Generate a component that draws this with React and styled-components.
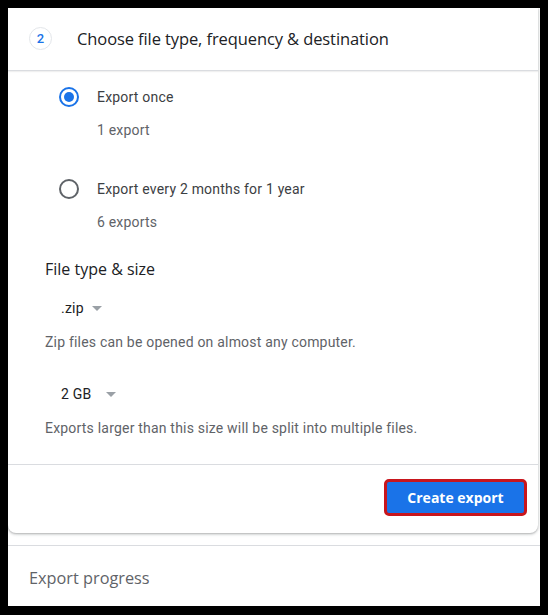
import styled, { createGlobalStyle } from "styled-components";

const GlobalStyle = createGlobalStyle`
  html, body {
    margin: 0;
    padding: 0;
    background: #000;
  }
  body {
    font-family: Roboto, "Liberation Sans", Arial, sans-serif;
  }
`;

const Screen = styled.div`
  margin: 8px 0 0 8px;
  width: 532px;
  height: 598px;
  background: #fff;
  overflow: hidden;
  display: flex;
  flex-direction: column;
`;

const Card = styled.section`
  margin-right: 2px;
  background: #fff;
  border-radius: 0 0 8px 8px;
  box-shadow: 0 1px 2px rgba(60, 64, 67, 0.3), 0 1px 3px 1px rgba(60, 64, 67, 0.12);
`;

const Header = styled.header`
  height: 62px;
  display: flex;
  align-items: center;
  gap: 25px;
  padding-left: 21px;
  border-bottom: 1px solid #dadce0;
  box-shadow: 0 1px 1px rgba(60, 64, 67, 0.08);
`;

const StepBadge = styled.span`
  width: 21px;
  height: 21px;
  border: 1px solid #e3e6ea;
  border-radius: 50%;
  display: flex;
  align-items: center;
  justify-content: center;
  color: #1a73e8;
  font-size: 13px;
  font-weight: 500;
  margin-top: -2px;
`;

const HeaderTitle = styled.h2`
  margin: 0;
  font-family: "Open Sans", Roboto, sans-serif;
  font-size: 16.5px;
  font-weight: 400;
  color: #202124;
  letter-spacing: -0.1px;
  margin-top: -2px;
`;

const Body = styled.div`
  padding: 14px 0 26px 37px;
  display: flex;
  flex-direction: column;
  letter-spacing: 0.2px;
`;

const Option = styled.label`
  display: flex;
  align-items: center;
  gap: 18px;
  height: 24px;
  padding-left: 14px;
  margin-top: ${(p) => p.$top || 0}px;
  color: #3c4043;
  font-size: 14px;
`;

const Radio = styled.span`
  box-sizing: border-box;
  width: 20px;
  height: 20px;
  border-radius: 50%;
  border: 2px solid ${(p) => (p.$checked ? "#1a73e8" : "#5f6368")};
  display: flex;
  align-items: center;
  justify-content: center;

  &::after {
    content: "";
    width: 10px;
    height: 10px;
    border-radius: 50%;
    background: ${(p) => (p.$checked ? "#1a73e8" : "transparent")};
  }
`;

const OptionNote = styled.div`
  margin-top: 11px;
  padding-left: 52px;
  line-height: 20px;
  font-size: 14px;
  color: #5f6368;
`;

const SectionTitle = styled.h3`
  margin: 25px 0 0;
  line-height: 24px;
  font-family: "Open Sans", Roboto, sans-serif;
  font-size: 16px;
  font-weight: 500;
  letter-spacing: 0;
  color: #202124;
`;

const Select = styled.div`
  margin-top: ${(p) => p.$top}px;
  margin-left: 16px;
  height: 24px;
  display: flex;
  align-items: center;
  gap: ${(p) => p.$gap}px;
  font-size: 14px;
  color: #202124;

  &::after {
    content: "";
    width: 0;
    height: 0;
    border-left: 5px solid transparent;
    border-right: 5px solid transparent;
    border-top: 5px solid #9aa0a6;
  }
`;

const Hint = styled.p`
  margin: 12px 0 0;
  line-height: 20px;
  font-size: 14px;
  color: #5f6368;
`;

const Footer = styled.footer`
  border-top: 1px solid #dadce0;
  padding: 14px 11px 17px 0;
  display: flex;
  justify-content: flex-end;
`;

const PrimaryButton = styled.button`
  box-sizing: border-box;
  width: 143px;
  height: 37px;
  border: 3px solid #c8161d;
  border-radius: 5px;
  background: #1a73e8;
  color: #fff;
  font-family: "Open Sans", Roboto, sans-serif;
  font-size: 14px;
  font-weight: 700;
  cursor: pointer;
`;

const ProgressCard = styled.section`
  margin-top: 12px;
  flex: 1;
  border-top: 1px solid #dadce0;
  display: flex;
  align-items: flex-start;
  padding: 20px 0 0 21px;
`;

const ProgressTitle = styled.h2`
  margin: 0;
  line-height: 24px;
  font-family: "Open Sans", Roboto, sans-serif;
  font-size: 16.3px;
  font-weight: 400;
  color: #5f6368;
`;

export default function App() {
  return (
    <>
      <GlobalStyle />
      <Screen>
        <Card>
          <Header>
            <StepBadge>2</StepBadge>
            <HeaderTitle>Choose file type, frequency &amp; destination</HeaderTitle>
          </Header>
          <Body>
            <Option>
              <Radio $checked />
              Export once
            </Option>
            <OptionNote>1 export</OptionNote>
            <Option $top={37}>
              <Radio />
              Export every 2 months for 1 year
            </Option>
            <OptionNote>6 exports</OptionNote>

            <SectionTitle>File type &amp; size</SectionTitle>
            <Select $top={15} $gap={8}>.zip</Select>
            <Hint>Zip files can be opened on almost any computer.</Hint>
            <Select $top={30} $gap={15}>2 GB</Select>
            <Hint>Exports larger than this size will be split into multiple files.</Hint>
          </Body>
          <Footer>
            <PrimaryButton>Create export</PrimaryButton>
          </Footer>
        </Card>
        <ProgressCard>
          <ProgressTitle>Export progress</ProgressTitle>
        </ProgressCard>
      </Screen>
    </>
  );
}
